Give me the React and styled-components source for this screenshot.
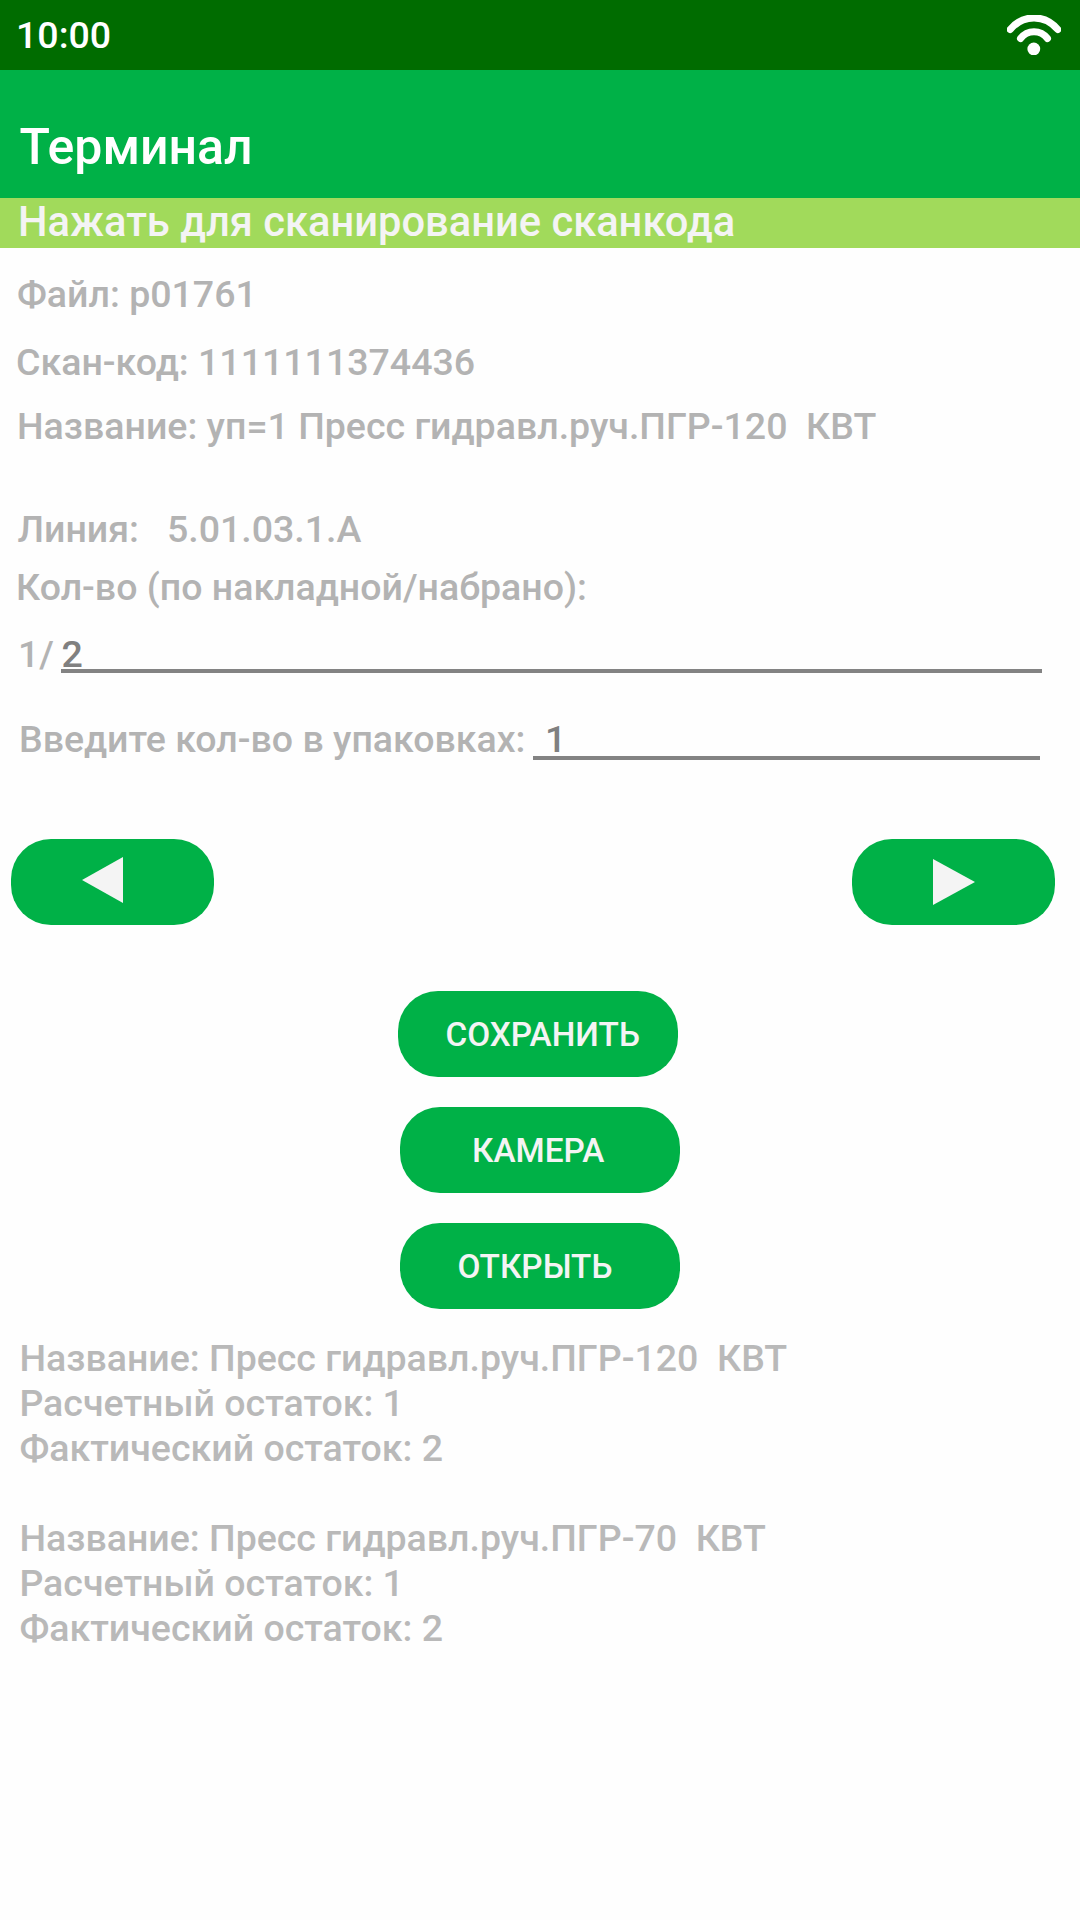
import React from "react";
import styled, { createGlobalStyle } from "styled-components";

const GlobalStyle = createGlobalStyle`
  body {
    margin: 0;
    background: #fefefe;
  }
  * {
    box-sizing: border-box;
  }
`;

const Screen = styled.div`
  display: flex;
  flex-direction: column;
  width: 1080px;
  height: 1920px;
  overflow: hidden;
  background: #fefefe;
  font-family: Roboto, "Noto Sans", sans-serif;
  font-size: 37.5px;
  font-weight: 500;
  line-height: 45px;
  white-space: pre;
`;

const StatusBar = styled.div`
  display: flex;
  justify-content: space-between;
  height: 70px;
  padding: 13px 19px 0 16px;
  background: #006c00;
  color: #fff;
`;

const WifiIcon = styled.svg`
  width: 54px;
  height: 40px;
  margin-top: 2px;
`;

const AppBar = styled.header`
  height: 128px;
  padding: 47px 19px 0 19.4px;
  background: #00b147;
  color: #fff;
  font-size: 50px;
  line-height: 60px;
`;

const ScanBanner = styled.div`
  height: 50px;
  padding-left: 18px;
  background: #a1da5b;
  color: #f4f4f4;
  font-size: 41.67px;
  line-height: 48px;
`;

const Details = styled.section`
  display: flex;
  flex-direction: column;
  padding-top: 24px;
  color: #b3b3b3;
`;

const Line = styled.div`
  display: flex;
  height: 45px;
  margin-top: ${(p) => p.$gap || 0}px;
  padding-left: ${(p) => p.$indent}px;
`;

const Field = styled.div`
  width: ${(p) => p.$width}px;
  height: ${(p) => p.$height}px;
  margin-left: auto;
  margin-right: ${(p) => p.$right}px;
  padding-left: ${(p) => p.$pad}px;
  border-bottom: 4px solid #838383;
  color: #808080;
`;

const Pager = styled.nav`
  display: flex;
  justify-content: space-between;
  margin-top: 77px;
  padding: 0 25px 0 11px;
`;

const Button = styled.button`
  display: block;
  width: ${(p) => p.$width}px;
  height: 86px;
  margin: 0;
  padding: 0 0 0 ${(p) => p.$pad}px;
  border: 0;
  border-radius: 40px;
  background: #00b147;
  color: #f4f4f4;
  font: 500 33.33px/86px Roboto, "Noto Sans", sans-serif;
  text-align: left;
`;

const ActionButton = styled(Button)`
  padding-top: 1px;
  line-height: 85px;
`;

const Arrow = styled.svg`
  display: block;
  width: 42px;
  height: 46px;
  margin-top: ${(p) => p.$shift}px;
`;

const Actions = styled.div`
  display: flex;
  flex-direction: column;
  gap: 30px;
  margin-top: 66px;
  padding-left: 400px;

  & > :first-child {
    margin-left: -2px;
  }
`;

const Stock = styled.section`
  display: flex;
  flex-direction: column;
  gap: 45px;
  margin-top: 27px;
  padding-left: 19.4px;
  color: #b9b9b9;
`;

const items = [
  ["Название: Пресс гидравл.руч.ПГР-120  КВТ", "Расчетный остаток: 1", "Фактический остаток: 2"],
  ["Название: Пресс гидравл.руч.ПГР-70  КВТ", "Расчетный остаток: 1", "Фактический остаток: 2"],
];

export default function App() {
  return (
    <Screen>
      <GlobalStyle />
      <StatusBar>
        <span>10:00</span>
        <WifiIcon viewBox="0 0 54 40" fill="none" stroke="#fff" strokeLinecap="round">
          <path d="M3.200 14.500C16 -1 38 -1 50.800 14.500" strokeWidth="7" />
          <path d="M13.500 23.500C20.500 14.500 33.500 14.500 40.500 23.500" strokeWidth="7" />
          <circle cx="26.800" cy="34" r="6.400" fill="#fff" stroke="none" />
        </WifiIcon>
      </StatusBar>
      <AppBar>Терминал</AppBar>
      <ScanBanner>Нажать для сканирование сканкода</ScanBanner>

      <Details>
        <Line $indent={17}>Файл: p01761</Line>
        <Line $indent={16} $gap={23}>Скан-код: 1111111374436</Line>
        <Line $indent={17} $gap={19}>Название: уп=1 Пресс гидравл.руч.ПГР-120  КВТ</Line>
        <Line $indent={17.5} $gap={58}>Линия:   5.01.03.1.А</Line>
        <Line $indent={16} $gap={13}>Кол-во (по накладной/набрано):</Line>
        <Line $indent={18} $gap={22}>
          1/
          <Field $width={981} $height={41} $right={38} $pad={0.4}>2</Field>
        </Line>
        <Line $indent={19} $gap={40}>
          Введите кол-во в упаковках:
          <Field $width={507} $height={43} $right={40} $pad={12}>1</Field>
        </Line>
      </Details>

      <Pager>
        <Button $width={203} $pad={71} aria-label="Назад">
          <Arrow $shift={-4} viewBox="0 0 42 46" fill="#f4f4f4">
            <path d="M0 23L41 0V46Z" />
          </Arrow>
        </Button>
        <Button $width={203} $pad={81} aria-label="Вперёд">
          <Arrow $shift={0} viewBox="0 0 42 46" fill="#f4f4f4">
            <path d="M42 23L0 0V46Z" />
          </Arrow>
        </Button>
      </Pager>

      <Actions>
        <ActionButton $width={280} $pad={47.4}>СОХРАНИТЬ</ActionButton>
        <ActionButton $width={280} $pad={72}>КАМЕРА</ActionButton>
        <ActionButton $width={280} $pad={57.4}>ОТКРЫТЬ</ActionButton>
      </Actions>

      <Stock>
        {items.map((lines) => (
          <div key={lines[0]}>
            {lines.map((line) => (
              <div key={line}>{line}</div>
            ))}
          </div>
        ))}
      </Stock>
    </Screen>
  );
}
